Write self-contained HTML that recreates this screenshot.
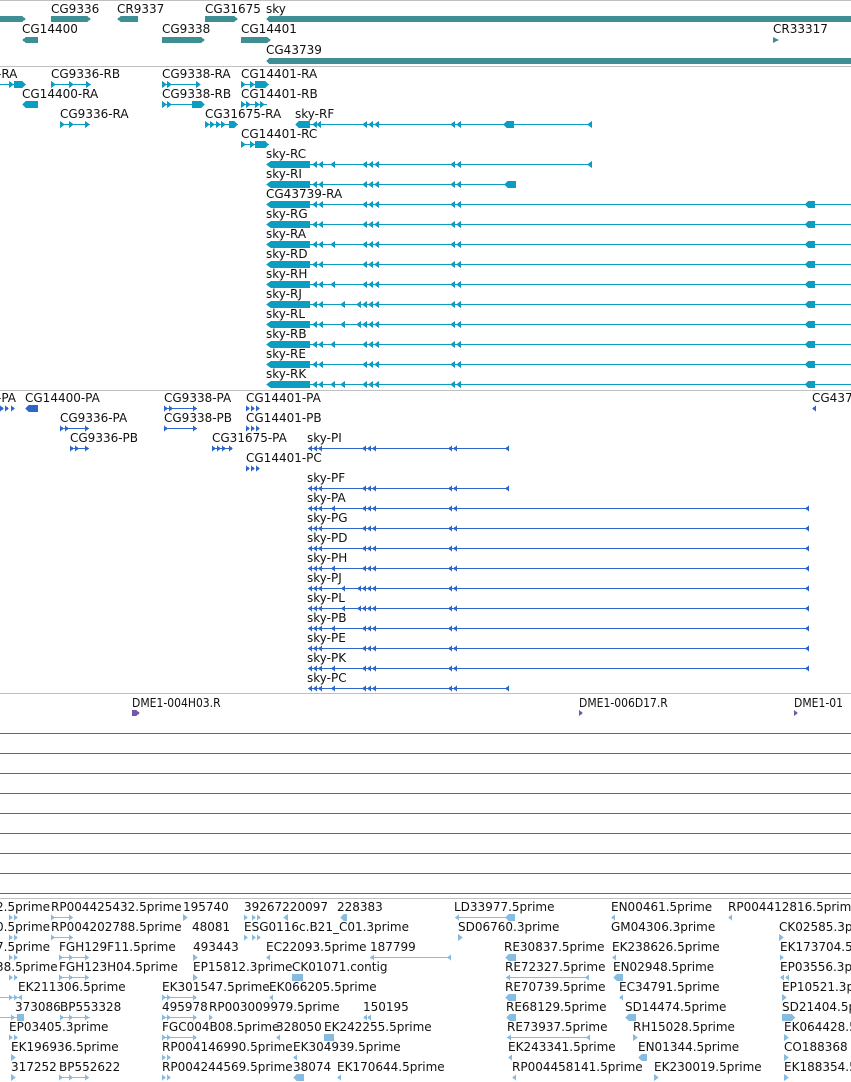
<!DOCTYPE html>
<html><head><meta charset="utf-8"><style>
html,body{margin:0;padding:0;background:#fff;width:851px;height:1082px;overflow:hidden}
svg{display:block}
text{font-family:"DejaVu Sans","Liberation Sans",sans-serif;font-size:12px;fill:#111}
.c text{font-family:"DejaVu Sans Condensed","DejaVu Sans","Liberation Sans",sans-serif;font-size:12px}
</style></head><body>
<svg width="851" height="1082" viewBox="0 0 851 1082" xmlns="http://www.w3.org/2000/svg" shape-rendering="crispEdges">
<defs>
<path id="tl" d="M0 0.5L5 -3V4Z"/>
<path id="tr" d="M5 0.5L0 -3V4Z"/>
<path id="sl" d="M0 0.5L4 -2.5V3.5Z"/>
<path id="sr" d="M4 0.5L0 -2.5V3.5Z"/>
<g id="skyBase">
<path d="M266 0.5L271 -3H310V4H271Z"/>
<use href="#tl" x="312"/><use href="#tl" x="318"/>
<use href="#tl" x="362"/><use href="#tl" x="368"/><use href="#tl" x="374"/>
<use href="#tl" x="450"/><use href="#tl" x="456"/>
</g>
<g id="pBase">
<use href="#sl" x="308"/><use href="#sl" x="313"/><use href="#sl" x="318"/>
<use href="#sl" x="362"/><use href="#sl" x="367"/><use href="#sl" x="372"/>
<use href="#sl" x="448"/><use href="#sl" x="453"/>
</g>
</defs>

<!-- separators -->
<g fill="#c0c0c0">
<rect x="0" y="0" width="851" height="1"/>
<rect x="0" y="66" width="851" height="1"/>
<rect x="0" y="390" width="851" height="1"/>
<rect x="0" y="693" width="851" height="1"/>
<rect x="0" y="898" width="851" height="1"/>
</g>

<!-- Section 1 -->
<g fill="#3d8f94">
<path d="M0 16H22L26 19L22 22H0Z"/>
<path d="M51 16H87L91 19L87 22H51Z"/>
<path d="M117 19L121 16H138V22H121Z"/>
<path d="M205 16H234L238 19L234 22H205Z"/>
<path d="M266 19L269 16H851V22H269Z"/>
<path d="M22 40L26 37H38V43H26Z"/>
<path d="M162 37H201L205 40L201 43H162Z"/>
<path d="M241 37H267L271 40L267 43H241Z"/>
<path d="M773 37L779 40L773 43Z"/>
<path d="M266 61L269 58H851V64H269Z"/>
</g>
<g>
<text x="51" y="13">CG9336</text><text x="117" y="13">CR9337</text><text x="205" y="13">CG31675</text><text x="266" y="13">sky</text>
<text x="22" y="33">CG14400</text><text x="162" y="33">CG9338</text><text x="241" y="33">CG14401</text><text x="773" y="33">CR33317</text>
<text x="266" y="54">CG43739</text>
</g>

<!-- Section 2 -->
<g fill="#0b9ec2" stroke="none">
<g transform="translate(0,84)">
<rect x="0" y="0" width="26" height="1"/><use href="#tr" x="9"/><path d="M14 -3H22L26 0.5L22 4H14Z"/>
<rect x="51" y="0" width="40" height="1"/><use href="#tr" x="51"/><use href="#tr" x="69"/><use href="#tr" x="86"/>
<rect x="162" y="0" width="38" height="1"/><use href="#tr" x="162"/><use href="#tr" x="167"/><use href="#tr" x="196"/>
<rect x="241" y="0" width="28" height="1"/><use href="#tr" x="241"/><use href="#tr" x="250"/><path d="M255 -3H265L269 0.5L265 4H255Z"/>
</g>
<g transform="translate(0,104)">
<path d="M22 0.5L26 -3H38V4H26Z"/>
<rect x="162" y="0" width="40" height="1"/><use href="#tr" x="162"/><use href="#tr" x="167"/><path d="M192 -3H201L205 0.5L201 4H192Z"/>
<rect x="241" y="0" width="26" height="1"/><use href="#tr" x="241"/><use href="#tr" x="246"/><use href="#tr" x="255"/><use href="#tr" x="260"/>
</g>
<g transform="translate(0,124)">
<rect x="60" y="0" width="30" height="1"/><use href="#tr" x="60"/><use href="#tr" x="69"/><use href="#tr" x="85"/>
<rect x="205" y="0" width="33" height="1"/><use href="#tr" x="205"/><use href="#tr" x="210"/><use href="#tr" x="216"/><use href="#tr" x="221"/><path d="M229 -3H234L238 0.5L234 4H229Z"/>
<path d="M295 0.5L299 -3H310V4H299Z"/><use href="#tl" x="312"/><use href="#tl" x="316"/>
<rect x="310" y="0" width="282" height="1"/>
<use href="#tl" x="362"/><use href="#tl" x="368"/><use href="#tl" x="374"/><use href="#tl" x="450"/><use href="#tl" x="456"/>
<path d="M503 0.5L507 -3H514V4H507Z"/><use href="#tl" x="587"/>
</g>
<g transform="translate(0,144)">
<rect x="241" y="0" width="28" height="1"/><use href="#tr" x="241"/><use href="#tr" x="250"/><path d="M255 -3H265L269 0.5L265 4H255Z"/>
</g>
<g transform="translate(0,164)"><use href="#skyBase"/><rect x="310" y="0" width="282" height="1"/><use href="#tl" x="330"/><use href="#tl" x="587"/></g>
<g transform="translate(0,184)"><use href="#skyBase"/><rect x="310" y="0" width="200" height="1"/><path d="M504 0.5L508 -3H516V4H508Z"/></g>
<g transform="translate(0,204)"><use href="#skyBase"/><rect x="310" y="0" width="541" height="1"/><path d="M805 0.5L808 -3H815V4H808Z"/></g>
<g transform="translate(0,224)"><use href="#skyBase"/><rect x="310" y="0" width="541" height="1"/><path d="M805 0.5L808 -3H815V4H808Z"/></g>
<g transform="translate(0,244)"><use href="#skyBase"/><use href="#tl" x="330"/><rect x="310" y="0" width="541" height="1"/><path d="M805 0.5L808 -3H815V4H808Z"/></g>
<g transform="translate(0,264)"><use href="#skyBase"/><rect x="310" y="0" width="541" height="1"/><path d="M805 0.5L808 -3H815V4H808Z"/></g>
<g transform="translate(0,284)"><use href="#skyBase"/><use href="#tl" x="330"/><rect x="310" y="0" width="541" height="1"/><path d="M805 0.5L808 -3H815V4H808Z"/></g>
<g transform="translate(0,304)"><use href="#skyBase"/><use href="#tl" x="340"/><use href="#tl" x="356"/><rect x="310" y="0" width="541" height="1"/><path d="M805 0.5L808 -3H815V4H808Z"/></g>
<g transform="translate(0,324)"><use href="#skyBase"/><use href="#tl" x="340"/><use href="#tl" x="356"/><rect x="310" y="0" width="541" height="1"/><path d="M805 0.5L808 -3H815V4H808Z"/></g>
<g transform="translate(0,344)"><use href="#skyBase"/><use href="#tl" x="330"/><rect x="310" y="0" width="541" height="1"/><path d="M805 0.5L808 -3H815V4H808Z"/></g>
<g transform="translate(0,364)"><use href="#skyBase"/><rect x="310" y="0" width="541" height="1"/><path d="M805 0.5L808 -3H815V4H808Z"/></g>
<g transform="translate(0,384)"><use href="#skyBase"/><use href="#tl" x="330"/><use href="#tl" x="340"/><rect x="310" y="0" width="541" height="1"/><path d="M805 0.5L808 -3H815V4H808Z"/></g>
</g>
<g>
<text x="-3" y="78">-RA</text><text x="51" y="78">CG9336-RB</text><text x="162" y="78">CG9338-RA</text><text x="241" y="78">CG14401-RA</text>
<text x="22" y="98">CG14400-RA</text><text x="162" y="98">CG9338-RB</text><text x="241" y="98">CG14401-RB</text>
<text x="60" y="118">CG9336-RA</text><text x="205" y="118">CG31675-RA</text><text x="295" y="118">sky-RF</text>
<text x="241" y="138">CG14401-RC</text>
<text x="266" y="158">sky-RC</text><text x="266" y="178">sky-RI</text><text x="266" y="198">CG43739-RA</text>
<text x="266" y="218">sky-RG</text><text x="266" y="238">sky-RA</text><text x="266" y="258">sky-RD</text>
<text x="266" y="278">sky-RH</text><text x="266" y="298">sky-RJ</text><text x="266" y="318">sky-RL</text>
<text x="266" y="338">sky-RB</text><text x="266" y="358">sky-RE</text><text x="266" y="378">sky-RK</text>
</g>

<!-- Section 3 -->
<g fill="#2f66cc">
<g transform="translate(0,408)">
<use href="#sr" x="0"/><use href="#sr" x="5"/><use href="#sr" x="11"/>
<path d="M25 0.5L29 -3H38V4H29Z"/>
<rect x="164" y="0" width="33" height="1"/><use href="#sr" x="164"/><use href="#sr" x="169"/><use href="#sr" x="193"/>
<use href="#sr" x="246"/><use href="#sr" x="251"/><use href="#sr" x="256"/>
<use href="#sl" x="812"/>
</g>
<g transform="translate(0,428)">
<rect x="60" y="0" width="29" height="1"/><use href="#sr" x="60"/><use href="#sr" x="65"/><use href="#sr" x="85"/>
<rect x="164" y="0" width="33" height="1"/><use href="#sr" x="164"/><use href="#sr" x="193"/>
<use href="#sr" x="246"/><use href="#sr" x="251"/><use href="#sr" x="256"/>
</g>
<g transform="translate(0,448)">
<rect x="70" y="0" width="19" height="1"/><use href="#sr" x="70"/><use href="#sr" x="75"/><use href="#sr" x="85"/>
<use href="#sr" x="212"/><use href="#sr" x="217"/><use href="#sr" x="222"/><rect x="212" y="0" width="20" height="1"/><use href="#sr" x="229"/>
<use href="#pBase"/><rect x="308" y="0" width="200" height="1"/><use href="#sl" x="505"/>
</g>
<g transform="translate(0,468)"><use href="#sr" x="246"/><use href="#sr" x="251"/><use href="#sr" x="256"/></g>
<g transform="translate(0,488)"><use href="#pBase"/><rect x="308" y="0" width="200" height="1"/><use href="#sl" x="505"/></g>
<g transform="translate(0,508)"><use href="#pBase"/><use href="#sl" x="331"/><rect x="308" y="0" width="500" height="1"/><use href="#sl" x="805"/></g>
<g transform="translate(0,528)"><use href="#pBase"/><rect x="308" y="0" width="500" height="1"/><use href="#sl" x="805"/></g>
<g transform="translate(0,548)"><use href="#pBase"/><rect x="308" y="0" width="500" height="1"/><use href="#sl" x="805"/></g>
<g transform="translate(0,568)"><use href="#pBase"/><use href="#sl" x="331"/><rect x="308" y="0" width="500" height="1"/><use href="#sl" x="805"/></g>
<g transform="translate(0,588)"><use href="#pBase"/><use href="#sl" x="341"/><use href="#sl" x="357"/><rect x="308" y="0" width="500" height="1"/><use href="#sl" x="805"/></g>
<g transform="translate(0,608)"><use href="#pBase"/><use href="#sl" x="341"/><use href="#sl" x="357"/><rect x="308" y="0" width="500" height="1"/><use href="#sl" x="805"/></g>
<g transform="translate(0,628)"><use href="#pBase"/><use href="#sl" x="331"/><rect x="308" y="0" width="500" height="1"/><use href="#sl" x="805"/></g>
<g transform="translate(0,648)"><use href="#pBase"/><rect x="308" y="0" width="500" height="1"/><use href="#sl" x="805"/></g>
<g transform="translate(0,668)"><use href="#pBase"/><use href="#sl" x="331"/><rect x="308" y="0" width="500" height="1"/><use href="#sl" x="805"/></g>
<g transform="translate(0,688)"><use href="#pBase"/><use href="#sl" x="331"/><rect x="308" y="0" width="200" height="1"/><use href="#sl" x="505"/></g>
</g>
<g>
<text x="-3" y="402">-PA</text><text x="25" y="402">CG14400-PA</text><text x="164" y="402">CG9338-PA</text><text x="246" y="402">CG14401-PA</text><text x="812" y="402">CG437</text>
<text x="60" y="422">CG9336-PA</text><text x="164" y="422">CG9338-PB</text><text x="246" y="422">CG14401-PB</text>
<text x="70" y="442">CG9336-PB</text><text x="212" y="442">CG31675-PA</text><text x="307" y="442">sky-PI</text>
<text x="246" y="462">CG14401-PC</text>
<text x="307" y="482">sky-PF</text><text x="307" y="502">sky-PA</text><text x="307" y="522">sky-PG</text>
<text x="307" y="542">sky-PD</text><text x="307" y="562">sky-PH</text><text x="307" y="582">sky-PJ</text>
<text x="307" y="602">sky-PL</text><text x="307" y="622">sky-PB</text><text x="307" y="642">sky-PE</text>
<text x="307" y="662">sky-PK</text><text x="307" y="682">sky-PC</text>
</g>

<!-- Section 4 -->
<g class="c">
<text x="132" y="707">DME1-004H03.R</text><text x="579" y="707">DME1-006D17.R</text><text x="794" y="707">DME1-01</text>
</g>
<g fill="#7059a8">
<path d="M132 710H136L140 713L136 716H132Z"/>
<path d="M579 710L583 713L579 716Z"/>
<path d="M794 710L798 713L794 716Z"/>
<rect x="0" y="733" width="851" height="1"/><rect x="0" y="753" width="851" height="1"/>
<rect x="0" y="773" width="851" height="1"/><rect x="0" y="793" width="851" height="1"/>
<rect x="0" y="813" width="851" height="1"/><rect x="0" y="833" width="851" height="1"/>
<rect x="0" y="853" width="851" height="1"/><rect x="0" y="873" width="851" height="1"/>
<rect x="0" y="893" width="851" height="1"/>
</g>

<!-- Section 5 -->
<g fill="#88bbe0">
<g transform="translate(0,917)"><use href="#sr" x="9"/><use href="#sr" x="14"/><rect x="51" y="0" width="22" height="1"/><use href="#sr" x="51"/><use href="#sr" x="69"/><use href="#tr" x="183"/><use href="#sr" x="244"/><use href="#sr" x="252"/><use href="#sr" x="257"/><use href="#tl" x="283"/><path d="M340 0.5L344 -3H347V4H344Z"/><rect x="455" y="0" width="60" height="1"/><use href="#sl" x="455"/><path d="M505 0.5L509 -3H515V4H509Z"/><use href="#sl" x="611"/><use href="#sl" x="728"/></g>
<g transform="translate(0,937)"><use href="#sr" x="9"/><use href="#sr" x="14"/><rect x="51" y="0" width="22" height="1"/><use href="#sr" x="51"/><use href="#sr" x="69"/><use href="#sr" x="244"/><use href="#sr" x="252"/><use href="#sr" x="257"/><use href="#tr" x="458"/><use href="#tr" x="779"/></g>
<g transform="translate(0,957)"><use href="#sr" x="9"/><use href="#sr" x="14"/><rect x="59" y="0" width="30" height="1"/><use href="#sr" x="59"/><use href="#sr" x="69"/><use href="#sr" x="85"/><use href="#tr" x="193"/><use href="#sl" x="266"/><rect x="370" y="0" width="80" height="1"/><use href="#sl" x="370"/><use href="#sl" x="447"/><path d="M505 0.5L509 -3H516V4H509Z"/><use href="#sl" x="612"/><use href="#sr" x="780"/></g>
<g transform="translate(0,977)"><use href="#sr" x="9"/><use href="#sr" x="14"/><rect x="59" y="0" width="30" height="1"/><use href="#sr" x="59"/><use href="#sr" x="69"/><use href="#sr" x="85"/><use href="#tr" x="193"/><path d="M292 -3H303V4H292Z"/><rect x="506" y="0" width="83" height="1"/><use href="#sl" x="506"/><use href="#sl" x="585"/><path d="M613 0.5L617 -3H623V4H617Z"/><use href="#sl" x="780"/><use href="#sl" x="785"/></g>
<g transform="translate(0,997)"><rect x="0" y="0" width="20" height="1"/><use href="#sr" x="9"/><use href="#sr" x="14"/><use href="#sl" x="18"/><rect x="162" y="0" width="34" height="1"/><use href="#sr" x="162"/><use href="#sr" x="167"/><use href="#sr" x="193"/><use href="#sl" x="269"/><path d="M505 0.5L509 -3H516V4H509Z"/><use href="#sl" x="619"/><use href="#tr" x="782"/></g>
<g transform="translate(0,1017)"><rect x="0" y="0" width="24" height="1"/><use href="#sr" x="11"/><path d="M17 -3H24V4H17Z"/><rect x="60" y="0" width="30" height="1"/><use href="#sr" x="60"/><use href="#sr" x="69"/><use href="#sr" x="85"/><rect x="162" y="0" width="34" height="1"/><use href="#sr" x="162"/><use href="#sr" x="167"/><use href="#sr" x="193"/><use href="#sr" x="209"/><use href="#sl" x="363"/><use href="#sl" x="367"/><path d="M506 0.5L510 -3H516V4H510Z"/><path d="M625 0.5L629 -3H636V4H629Z"/><path d="M782 -3H792L795 0.5L792 4H782Z"/></g>
<g transform="translate(0,1037)"><use href="#sr" x="9"/><use href="#sr" x="14"/><rect x="162" y="0" width="34" height="1"/><use href="#sr" x="162"/><use href="#sr" x="167"/><use href="#sr" x="193"/><use href="#sl" x="276"/><path d="M324 -3H334V4H324Z"/><rect x="507" y="0" width="83" height="1"/><use href="#sl" x="507"/><use href="#sl" x="586"/><use href="#tr" x="633"/><use href="#tr" x="784"/></g>
<g transform="translate(0,1057)"><use href="#tr" x="11"/><use href="#sr" x="162"/><use href="#sr" x="167"/><use href="#sl" x="293"/><use href="#sl" x="508"/><path d="M638 0.5L642 -3H647V4H642Z"/><use href="#tr" x="784"/></g>
<g transform="translate(0,1077)"><use href="#tr" x="11"/><rect x="59" y="0" width="30" height="1"/><use href="#sr" x="59"/><use href="#sr" x="69"/><use href="#sr" x="85"/><use href="#sr" x="162"/><use href="#sr" x="167"/><path d="M293 0.5L297 -3H304V4H297Z"/><use href="#sl" x="337"/><use href="#sl" x="512"/><use href="#tr" x="654"/><use href="#tr" x="784"/></g>
</g>
<g>
<text x="-4" y="911">2.5prime</text><text x="51" y="911">RP004425432.5prime</text><text x="183" y="911">195740</text><text x="244" y="911">39267220097</text><text x="337" y="911">228383</text><text x="454" y="911">LD33977.5prime</text><text x="611" y="911">EN00461.5prime</text><text x="728" y="911">RP004412816.5prime</text>
<text x="-4" y="931">0.5prime</text><text x="51" y="931">RP004202788.5prime</text><text x="192" y="931">48081</text><text x="244" y="931">ESG0116c.B21_C01.3prime</text><text x="458" y="931">SD06760.3prime</text><text x="611" y="931">GM04306.3prime</text><text x="779" y="931">CK02585.3prime</text>
<text x="-4" y="951">7.5prime</text><text x="59" y="951">FGH129F11.5prime</text><text x="193" y="951">493443</text><text x="266" y="951">EC22093.5prime</text><text x="370" y="951">187799</text><text x="504" y="951">RE30837.5prime</text><text x="612" y="951">EK238626.5prime</text><text x="780" y="951">EK173704.5prime</text>
<text x="-4" y="971">38.5prime</text><text x="59" y="971">FGH123H04.5prime</text><text x="193" y="971">EP15812.3prime</text><text x="292" y="971">CK01071.contig</text><text x="505" y="971">RE72327.5prime</text><text x="613" y="971">EN02948.5prime</text><text x="780" y="971">EP03556.3prime</text>
<text x="18" y="991">EK211306.5prime</text><text x="162" y="991">EK301547.5prime</text><text x="269" y="991">EK066205.5prime</text><text x="505" y="991">RE70739.5prime</text><text x="619" y="991">EC34791.5prime</text><text x="782" y="991">EP10521.3prime</text>
<text x="15" y="1011">373086</text><text x="60" y="1011">BP553328</text><text x="162" y="1011">495978</text><text x="209" y="1011">RP003009979.5prime</text><text x="363" y="1011">150195</text><text x="506" y="1011">RE68129.5prime</text><text x="625" y="1011">SD14474.5prime</text><text x="782" y="1011">SD21404.5prime</text>
<text x="9" y="1031">EP03405.3prime</text><text x="162" y="1031">FGC004B08.5prime</text><text x="276" y="1031">328050</text><text x="324" y="1031">EK242255.5prime</text><text x="507" y="1031">RE73937.5prime</text><text x="633" y="1031">RH15028.5prime</text><text x="784" y="1031">EK064428.5prime</text>
<text x="11" y="1051">EK196936.5prime</text><text x="162" y="1051">RP004146990.5prime</text><text x="293" y="1051">EK304939.5prime</text><text x="508" y="1051">EK243341.5prime</text><text x="638" y="1051">EN01344.5prime</text><text x="784" y="1051">CO188368</text>
<text x="11" y="1071">317252</text><text x="59" y="1071">BP552622</text><text x="162" y="1071">RP004244569.5prime</text><text x="293" y="1071">38074</text><text x="337" y="1071">EK170644.5prime</text><text x="512" y="1071">RP004458141.5prime</text><text x="654" y="1071">EK230019.5prime</text><text x="784" y="1071">EK188354.5prime</text>
</g>
</svg>
</body></html>
